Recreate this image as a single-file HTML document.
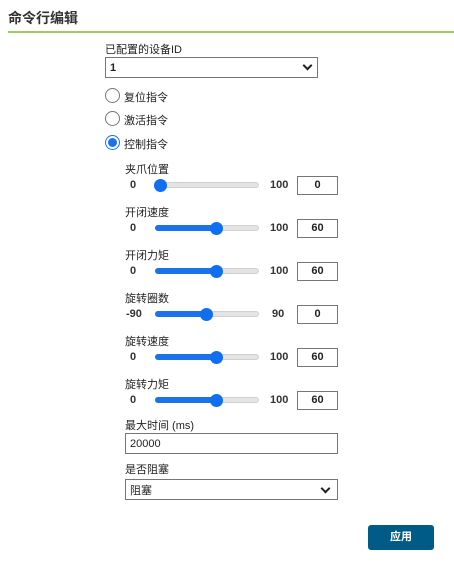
<!DOCTYPE html>
<html><head><meta charset="utf-8"><style>
*{margin:0;padding:0;box-sizing:border-box}
body{width:454px;height:573px;background:#fff;position:relative;font-family:"Liberation Sans","Noto Sans CJK SC",sans-serif;color:#222;font-size:11px;overflow:hidden}
.a{position:absolute;white-space:nowrap}
.box{position:absolute;border:1px solid #767676;background:#fff;font-size:11px;padding-left:4px;display:flex;align-items:center}
.radio{position:absolute;width:15px;height:15px;border:1px solid #767676;border-radius:50%;background:#fff}
.track{position:absolute;height:6px;border-radius:3px;background:#e4e4e4;border:1px solid #d0d0d0}
.fill{position:absolute;height:6px;border-radius:3px;background:#1a73e8}
.thumb{position:absolute;width:13px;height:13px;border-radius:50%;background:#0f6ff0}
.num{position:absolute;font-size:11px;font-weight:bold;color:#333}
.ib{position:absolute;width:41px;height:19px;border:1px solid #767676;text-align:center;font-size:11px;line-height:17px;font-weight:bold}
.chev{position:absolute;width:7px;height:7px;border-right:2px solid #222;border-bottom:2px solid #222;transform:rotate(45deg)}
</style></head><body>
<div class="a" style="left:8px;top:8px;font-size:14px;font-weight:bold;color:#333">命令行编辑</div>
<div class="a" style="left:8px;top:31px;width:446px;height:2px;background:#9ccc5a"></div>

<div class="a" style="left:105px;top:41px">已配置的设备ID</div>
<div class="box" style="left:105px;top:57px;width:213px;height:21px;font-weight:bold">1</div>
<div class="chev" style="left:304px;top:62px"></div>

<div class="radio" style="left:105px;top:88px"></div><div class="a" style="left:124px;top:89px">复位指令</div>
<div class="radio" style="left:105px;top:111px"></div><div class="a" style="left:124px;top:112px">激活指令</div>
<div class="radio" style="left:105px;top:135px;border:1px solid #1a73e8"><div style="position:absolute;left:2px;top:2px;width:9px;height:9px;border-radius:50%;background:#1a73e8"></div></div>
<div class="a" style="left:124px;top:136px">控制指令</div>

<!-- sliders -->
<div class="a" style="left:125px;top:161px">夹爪位置</div>
<div class="num" style="left:130px;top:179px">0</div>
<div class="track" style="left:155px;top:182px;width:104px"></div>
<div class="thumb" style="left:154px;top:179px"></div>
<div class="num" style="left:270px;top:179px">100</div>
<div class="ib" style="left:297px;top:176px">0</div>

<div class="a" style="left:125px;top:204px">开闭速度</div>
<div class="num" style="left:130px;top:222px">0</div>
<div class="track" style="left:155px;top:225px;width:104px"></div>
<div class="fill" style="left:155px;top:225px;width:62px"></div>
<div class="thumb" style="left:210px;top:222px"></div>
<div class="num" style="left:270px;top:222px">100</div>
<div class="ib" style="left:297px;top:219px">60</div>

<div class="a" style="left:125px;top:247px">开闭力矩</div>
<div class="num" style="left:130px;top:265px">0</div>
<div class="track" style="left:155px;top:268px;width:104px"></div>
<div class="fill" style="left:155px;top:268px;width:62px"></div>
<div class="thumb" style="left:210px;top:265px"></div>
<div class="num" style="left:270px;top:265px">100</div>
<div class="ib" style="left:297px;top:262px">60</div>

<div class="a" style="left:125px;top:290px">旋转圈数</div>
<div class="num" style="left:126px;top:308px">-90</div>
<div class="track" style="left:155px;top:311px;width:104px"></div>
<div class="fill" style="left:155px;top:311px;width:52px"></div>
<div class="thumb" style="left:200px;top:308px"></div>
<div class="num" style="left:272px;top:308px">90</div>
<div class="ib" style="left:297px;top:305px">0</div>

<div class="a" style="left:125px;top:333px">旋转速度</div>
<div class="num" style="left:130px;top:351px">0</div>
<div class="track" style="left:155px;top:354px;width:104px"></div>
<div class="fill" style="left:155px;top:354px;width:62px"></div>
<div class="thumb" style="left:210px;top:351px"></div>
<div class="num" style="left:270px;top:351px">100</div>
<div class="ib" style="left:297px;top:348px">60</div>

<div class="a" style="left:125px;top:376px">旋转力矩</div>
<div class="num" style="left:130px;top:394px">0</div>
<div class="track" style="left:155px;top:397px;width:104px"></div>
<div class="fill" style="left:155px;top:397px;width:62px"></div>
<div class="thumb" style="left:210px;top:394px"></div>
<div class="num" style="left:270px;top:394px">100</div>
<div class="ib" style="left:297px;top:391px">60</div>

<div class="a" style="left:125px;top:417px">最大时间 (ms)</div>
<div class="box" style="left:125px;top:433px;width:213px;height:21px">20000</div>

<div class="a" style="left:125px;top:461px">是否阻塞</div>
<div class="box" style="left:125px;top:479px;width:213px;height:21px">阻塞</div>
<div class="chev" style="left:322px;top:485px"></div>

<div class="a" style="left:368px;top:525px;width:66px;height:25px;background:#005b87;border-radius:3px;color:#fff;font-weight:bold;text-align:center;line-height:25px">应用</div>
</body></html>
